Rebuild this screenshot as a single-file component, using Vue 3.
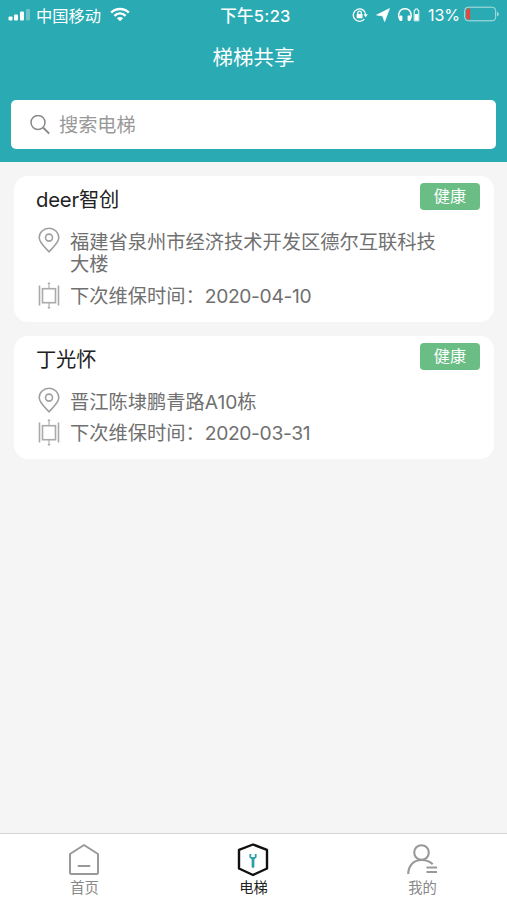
<script setup>
import { ref } from 'vue'

const keyword = ref('')
const activeTab = ref('elevator')

// Lista de ascensores
const elevators = [
  {
    id: 1,
    name: 'deer智创',
    status: '健康',
    address: '福建省泉州市经济技术开发区德尔互联科技大楼',
    nextDate: '2020-04-10'
  },
  {
    id: 2,
    name: '丁光怀',
    status: '健康',
    address: '晋江陈埭鹏青路A10栋',
    nextDate: '2020-03-31'
  }
]

const tabs = [
  { key: 'home', label: '首页' },
  { key: 'elevator', label: '电梯' },
  { key: 'mine', label: '我的' }
]
</script>

<template>
  <div class="app">
    <header class="header">
      <div class="status-bar">
        <div class="status-left">
          <svg width="23" height="14" viewBox="0 0 23 14" fill="#fff">
            <rect x="0.5" y="8.5" width="4" height="4" rx="1" />
            <rect x="6" y="6.5" width="4" height="6" rx="1" />
            <rect x="12" y="3.5" width="4" height="9" rx="1" />
            <rect x="18" y="1" width="4" height="11.5" rx="1" opacity="0.3" />
          </svg>
          <span class="carrier">中国移动</span>
          <svg class="wifi" width="20" height="15" viewBox="0 0 20 15" fill="none" stroke="#fff" stroke-width="2.5">
            <path d="M1.2 5.6C6.2 0.7 13.8 0.7 18.8 5.6" />
            <path d="M4.4 8.9C7.7 5.8 12.3 5.8 15.6 8.9" />
            <path d="M10 14.2L6.9 11.2C8.7 9.6 11.3 9.6 13.1 11.2Z" fill="#fff" stroke="none" />
          </svg>
        </div>
        <div class="time">下午5:23</div>
        <div class="status-right">
          <svg width="16" height="16" viewBox="0 0 16 16" fill="none" stroke="#fff" stroke-width="1.3">
            <path d="M12.3 12.1A6.2 6.2 0 1 1 13.7 7.6" />
            <path d="M11.5 7.3h4.3l-2.1 2.9z" fill="#fff" stroke="none" />
            <rect x="4.7" y="7" width="5.8" height="4.2" rx="0.5" fill="#fff" stroke="none" />
            <path d="M5.9 7V5.800a1.7 1.7 0 0 1 3.4 0V7" />
          </svg>
          <svg class="arrow" width="14" height="14" viewBox="0 0 14 14" fill="#fff">
            <path d="M13.5 0.6L0.6 7L6.6 7.9L8.6 13.6Z" stroke="#fff" stroke-width="0.7" stroke-linejoin="round" />
          </svg>
          <svg class="headphones" width="24" height="16" viewBox="0 0 24 16">
            <path d="M3.3 13C-0.2 8 2.5 1.8 8 1.8S15.8 8 12.7 13" fill="none" stroke="#fff" stroke-width="1.5" />
            <rect x="2.6" y="8.5" width="2.8" height="5.5" rx="1" fill="#fff" />
            <rect x="10.6" y="8.5" width="2.8" height="5.5" rx="1" fill="#fff" />
            <path d="M18.2 3.5V2h2.6v1.5h1v10.3h-4.6V3.5z" fill="none" stroke="#fff" />
            <rect x="18" y="7" width="3" height="6" fill="#fff" />
          </svg>
          <span class="percent">13%</span>
          <svg width="36" height="17" viewBox="0 0 36 17">
            <rect x="0.7" y="1.2" width="31" height="13.6" rx="3.5" fill="none" stroke="#b5e0e3" />
            <path d="M2.2 4.500a2 2 0 0 1 2-2h1.900v11H4.200a2 2 0 0 1-2-2z" fill="#e8453c" />
            <path d="M33.2 5.700c2 0.800 2 3.800 0 4.600z" fill="#b5e0e3" />
          </svg>
        </div>
      </div>
      <h1 class="page-title">梯梯共享</h1>
      <label class="search">
        <svg width="20" height="20" viewBox="0 0 20 20" fill="none" stroke="#888" stroke-width="1.5">
          <circle cx="8" cy="7.500" r="7" />
          <path d="M13 12.500L19.2 18.700" stroke-width="1.9" />
        </svg>
        <input v-model="keyword" type="text" placeholder="搜索电梯" />
      </label>
    </header>

    <main class="list">
      <div v-for="item in elevators" :key="item.id" class="card">
        <div class="card-head">
          <h2>{{ item.name }}</h2>
          <span class="badge">{{ item.status }}</span>
        </div>
        <div class="row">
          <svg width="22" height="26" viewBox="0 0 22 26" fill="none" stroke="#a0a0a0" stroke-width="1.6">
            <path d="M11 24.8C8.5 21.8 1.2 16 1.2 10.600A9.800 9.400 0 0 1 20.8 10.600C20.8 16 13.5 21.8 11 24.8Z" />
            <circle cx="11" cy="10.6" r="3.5" />
          </svg>
          <p>{{ item.address }}</p>
        </div>
        <div class="row">
          <svg width="22" height="28" viewBox="0 0 22 28" fill="none" stroke="#aaa" stroke-width="1.6">
            <path d="M1.5 4.500V24.500M20.5 4.500V24.500" />
            <rect x="4.5" y="7.7" width="13" height="14" />
            <path d="M11 7.500V2M11 22V27" stroke-width="1.1" />
            <path d="M9.300 3L11 1L12.700 3ZM9.300 26L11 28L12.700 26Z" fill="#aaa" stroke="none" />
          </svg>
          <p>下次维保时间：<span class="date">{{ item.nextDate }}</span></p>
        </div>
      </div>
    </main>

    <nav class="tab-bar">
      <div
        v-for="tab in tabs"
        :key="tab.key"
        :class="['tab', { active: activeTab === tab.key }]"
        @click="activeTab = tab.key"
      >
        <svg v-if="tab.key === 'home'" width="34" height="34" viewBox="0 0 34 34" fill="none" stroke="#999" stroke-width="2" stroke-linejoin="round" stroke-linecap="round">
          <path d="M3 11L17 2L31 11V29.5Q31 31 29.5 31H4.5Q3 31 3 29.5Z" />
          <path d="M11.5 23H22.5" />
        </svg>
        <svg v-else-if="tab.key === 'elevator'" width="34" height="34" viewBox="0 0 34 34" fill="none" stroke-linejoin="round">
          <path d="M17 1.5L31 6.8V25.5L17 32L3 25.5V6.8Z" stroke="#111" stroke-width="2.4" />
          <path d="M14.3 11V14L17 16L19.700 14V11" stroke="#2b9fac" stroke-width="1.800" />
          <path d="M17 15.500V23.500" stroke="#2b9fac" stroke-width="2.800" stroke-linecap="round" />
        </svg>
        <svg v-else width="34" height="34" viewBox="0 0 34 34" fill="none" stroke="#999" stroke-width="2.1">
          <circle cx="16.5" cy="9.500" r="7.3" />
          <path d="M3.2 31C3.500 21.500 9.500 17 16.5 17C21 17 25 18.500 27.700 21.300" />
          <path d="M21.500 24.500H32M21.500 29H32" />
        </svg>
        <span>{{ tab.label }}</span>
      </div>
    </nav>
  </div>
</template>

<style>
body {
  margin: 0;
  background-color: #f5f5f5;
}
</style>

<style scoped>
.app {
  display: flex;
  flex-direction: column;
  height: 100vh;
  font-family: Inter, "Noto Sans CJK SC", sans-serif;
  background-color: #f5f5f5;
}

.header {
  box-sizing: border-box;
  height: 162px;
  color: #fff;
  background-color: #2aabb3;
}

.status-bar {
  display: grid;
  grid-template-columns: 1fr auto 1fr;
  align-items: center;
  height: 29px;
  padding: 0 7px 0 8px;
  font-size: 16.3px;
}

.status-left,
.status-right {
  display: flex;
  align-items: center;
}

.status-right {
  justify-content: flex-end;
}

.carrier {
  margin-left: 5px;
}

.wifi {
  margin-left: 9px;
}

.time {
  padding-left: 3px;
  font-size: 16.5px;
  font-weight: 500;
  letter-spacing: 0.3px;
}

.arrow {
  margin-left: 8px;
}

.headphones {
  margin-left: 7px;
}

.percent {
  margin: 0 4px 0 7px;
  font-size: 16px;
}

.page-title {
  margin: 0;
  height: 58px;
  line-height: 58px;
  font-size: 20.5px;
  font-weight: 400;
  text-align: center;
}

.search {
  display: flex;
  align-items: center;
  height: 49px;
  margin: 13px 11px 0;
  padding: 0 19px;
  box-sizing: border-box;
  background-color: #fff;
  border-radius: 5px;
}

.search input {
  flex: 1;
  min-width: 0;
  margin-left: 9px;
  padding: 0;
  border: none;
  outline: none;
  font-family: inherit;
  font-size: 19.2px;
  background: none;
}

.search input::placeholder {
  color: #999;
}

.list {
  flex: 1;
  display: flex;
  flex-direction: column;
  gap: 14px;
  padding: 14px 13px 0 14px;
}

.card {
  padding: 7px 14px 15px 22px;
  background-color: #fff;
  border-radius: 14px;
}

.card-head {
  display: flex;
  justify-content: space-between;
  align-items: flex-start;
  height: 48px;
}

.card-head h2 {
  margin: 0;
  line-height: 33px;
  font-size: 20.3px;
  font-weight: 400;
  letter-spacing: -0.2px;
  color: #222;
}

.badge {
  width: 60px;
  height: 27px;
  line-height: 27px;
  border-radius: 4px;
  font-size: 16.2px;
  text-align: center;
  color: #fff;
  background-color: #6abd85;
}

.row {
  display: flex;
  align-items: flex-start;
}

.row + .row {
  margin-top: 9.5px;
}

.row svg {
  flex: none;
  margin: -4px 10px -4px 2px;
}

.row p {
  margin: 0;
  width: 370px;
  line-height: 22px;
  font-size: 19.25px;
  color: #707070;
}

.date {
  letter-spacing: -0.35px;
}

.tab-bar {
  display: flex;
  box-sizing: border-box;
  height: 67px;
  border-top: 1px solid #d5d5d5;
  background-color: #fff;
}

.tab {
  flex: 1;
  display: flex;
  flex-direction: column;
  align-items: center;
  padding-top: 9px;
  font-size: 14.3px;
  line-height: 21px;
  color: #888;
  cursor: pointer;
}

.tab svg {
  margin-left: -1px;
}

.tab.active {
  color: #222;
}
</style>
